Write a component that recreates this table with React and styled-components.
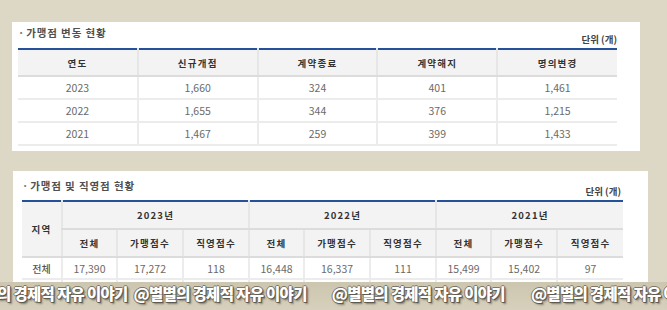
import React from "react";
import styled, { createGlobalStyle } from "styled-components";

const Global = createGlobalStyle`
  html, body { margin: 0; padding: 0; }
  body {
    background: #ddd8c5;
    font-family: "Noto Sans CJK KR", "Noto Sans", sans-serif;
    width: 667px;
    height: 310px;
    overflow: hidden;
  }
`;

const Page = styled.div`
  position: relative;
  width: 667px;
  height: 310px;
  overflow: hidden;
  padding-top: 22px;
  box-sizing: border-box;
  display: flex;
  flex-direction: column;
  gap: 20px;
`;

const Panel = styled.section`
  background: #fff;
  margin-left: ${(p) => p.$left}px;
  width: ${(p) => p.$width}px;
  padding: 0 ${(p) => p.$padR}px ${(p) => p.$padB}px ${(p) => p.$padL}px;
  box-sizing: border-box;
  flex-shrink: 0;
`;

const TitleBar = styled.div`
  display: flex;
  justify-content: space-between;
  height: ${(p) => p.$h}px;
`;

const Title = styled.h3`
  margin: ${(p) => p.$mt}px 0 0 0;
  font-size: 10.5px;
  line-height: 14px;
  font-weight: 700;
  color: #505050;
  letter-spacing: 0.9px;
`;

const Dot = styled.span`
  margin-right: 1px;
  color: #777;
`;

const Unit = styled.span`
  align-self: flex-end;
  margin-bottom: 3px;
  font-size: 9.5px;
  line-height: 12px;
  color: #444;
  font-weight: 700;
`;

const Table = styled.table`
  width: 100%;
  border-collapse: collapse;
  table-layout: fixed;
  border-top: 2px solid #25509a;
`;

const Th = styled.th`
  background: #f3f3f3;
  height: ${(p) => p.$h}px;
  padding: 0;
  font-size: 9.5px;
  font-weight: 700;
  color: #333;
  letter-spacing: 1.2px;
  border-bottom: 2px solid #dcdcdc;
  border-left: 2px solid #e6e6e6;
  &:first-child { border-left: none; }
`;

const SubTh = styled(Th)`
  &:first-child { border-left: 2px solid #e6e6e6; }
`;

const Td = styled.td`
  height: ${(p) => p.$h}px;
  padding: 0;
  text-align: center;
  font-size: 10.5px;
  color: #6a6a6a;
  border-bottom: 2px solid #ececec;
  border-left: 2px solid #ececec;
  &:first-child { border-left: none; }
`;

const RegionTd = styled(Td)`
  font-size: 10px;
  color: #555;
  font-weight: 500;
`;

const Watermark = styled.div`
  position: absolute;
  left: 0;
  right: 0;
  top: 282px;
  bottom: 0;
  background: linear-gradient(#ccc5af, #d7d0bc);
  display: flex;
  align-items: flex-start;
  white-space: nowrap;
  overflow: hidden;
`;

const Mark = styled.span`
  flex-shrink: 0;
  margin-left: ${(p) => p.$ml}px;
  margin-top: 1px;
  font-size: 15.5px;
  line-height: 20px;
  font-weight: 900;
  color: #fff;
  letter-spacing: -0.7px;
  text-shadow: 1px 1px 0 #5e5a4e, -1px 0 0 #7d786a, 0 -1px 0 #7d786a, 1px 0 0 #7d786a, 0 1px 0 #7d786a, 2px 2px 2px rgba(0,0,0,0.4);
`;

const changes = [
  ["2023", "1,660", "324", "401", "1,461"],
  ["2022", "1,655", "344", "376", "1,215"],
  ["2021", "1,467", "259", "399", "1,433"],
];

const years = ["2023년", "2022년", "2021년"];
const sub = ["전체", "가맹점수", "직영점수"];
const totals = ["17,390", "17,272", "118", "16,448", "16,337", "111", "15,499", "15,402", "97"];

export default function App() {
  return (
    <>
      <Global />
      <Page>
        <Panel $left={12} $width={628} $padL={6} $padR={23} $padB={5}>
          <TitleBar $h={26}>
            <Title $mt={4}><Dot>·</Dot>가맹점 변동 현황</Title>
            <Unit>단위 (개)</Unit>
          </TitleBar>
          <Table>
            <thead>
              <tr>
                {["연도", "신규개점", "계약종료", "계약해지", "명의변경"].map((h) => (
                  <Th key={h} $h={25}>{h}</Th>
                ))}
              </tr>
            </thead>
            <tbody>
              {changes.map((r) => (
                <tr key={r[0]}>
                  {r.map((c, i) => (
                    <Td key={i} $h={21}>{c}</Td>
                  ))}
                </tr>
              ))}
            </tbody>
          </Table>
        </Panel>

        <Panel $left={13} $width={635} $padL={9} $padR={27} $padB={40}>
          <TitleBar $h={29}>
            <Title $mt={8}><Dot>·</Dot>가맹점 및 직영점 현황</Title>
            <Unit>단위 (개)</Unit>
          </TitleBar>
          <Table>
            <colgroup>
              <col style={{ width: 40 }} />
              {years.map((y) => (
                <React.Fragment key={y}>
                  <col style={{ width: 55 }} />
                  <col style={{ width: 66 }} />
                  <col style={{ width: 66 }} />
                </React.Fragment>
              ))}
            </colgroup>
            <thead>
              <tr>
                <Th rowSpan={2} $h={54}>지역</Th>
                {years.map((y) => (
                  <Th key={y} colSpan={3} $h={26}>{y}</Th>
                ))}
              </tr>
              <tr>
                {years.map((y) =>
                  sub.map((s) => (
                    <SubTh key={y + s} $h={26}>{s}</SubTh>
                  ))
                )}
              </tr>
            </thead>
            <tbody>
              <tr>
                <RegionTd $h={20}>전체</RegionTd>
                {totals.map((t, i) => (
                  <Td key={i} $h={20}>{t}</Td>
                ))}
              </tr>
              <tr>
                <RegionTd $h={20}></RegionTd>
                {totals.map((t, i) => (
                  <Td key={i} $h={20}></Td>
                ))}
              </tr>
            </tbody>
          </Table>
        </Panel>

        <Watermark>
          <Mark $ml={-3}>의 경제적 자유 이야기</Mark>
          <Mark $ml={6}>@별별의 경제적 자유 이야기</Mark>
          <Mark $ml={25}>@별별의 경제적 자유 이야기</Mark>
          <Mark $ml={26}>@별별의 경제적 자유 이야기</Mark>
        </Watermark>
      </Page>
    </>
  );
}
